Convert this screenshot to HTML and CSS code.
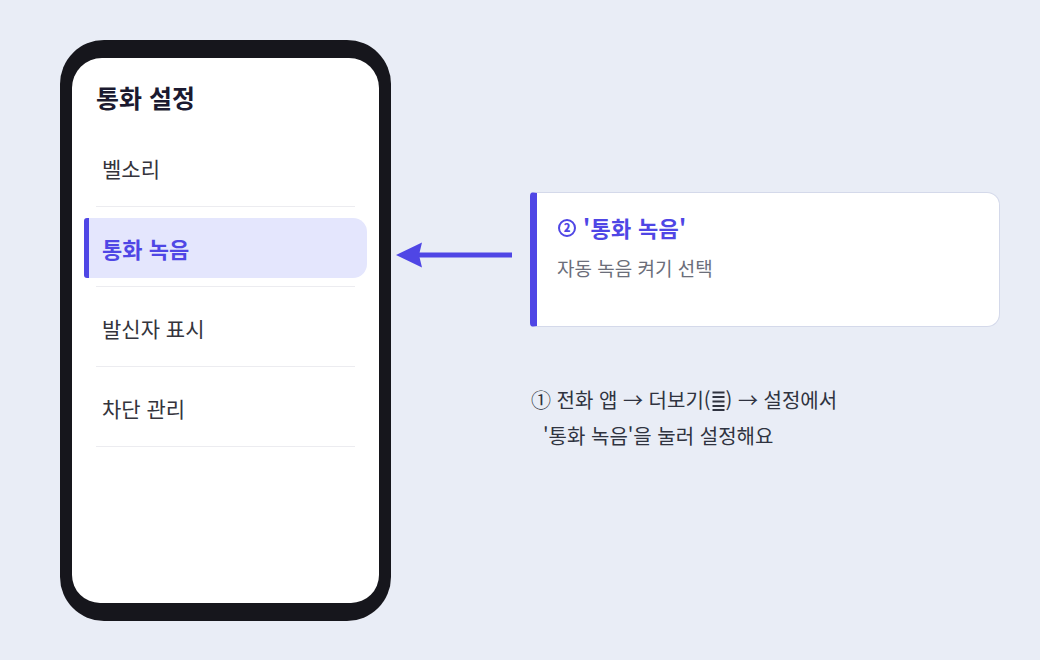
FILE: index.html
```html
<!DOCTYPE html>
<html lang="ko">
<head>
<meta charset="utf-8">
<title>통화 설정</title>
<link rel="stylesheet" href="styles.css">
</head>
<body>
<div class="stage">
  <div class="phone">
    <div class="screen">
      <h1 class="screen-title">통화 설정</h1>
      <ul class="menu">
        <li class="menu-row"><div class="menu-item">벨소리</div></li>
        <li class="menu-row"><div class="menu-item active">통화 녹음</div></li>
        <li class="menu-row"><div class="menu-item">발신자 표시</div></li>
        <li class="menu-row"><div class="menu-item">차단 관리</div></li>
      </ul>
    </div>
  </div>
  <div class="side">
    <div class="callout">
      <svg class="arrow" width="116" height="26" viewBox="0 0 116 26">
        <rect x="22" y="10.5" width="94" height="5" fill="#4f46e5"/>
        <path d="M0 13 L26 0.5 L23 13 L26 25.5 Z" fill="#4f46e5"/>
      </svg>
      <div class="card">
        <div class="card-title"><span class="num">2</span>'통화 녹음'</div>
        <div class="card-sub">자동 녹음 켜기 선택</div>
      </div>
    </div>
    <p class="note"><span class="note-line">① 전화 앱 → 더보기(<svg class="menu-icon" width="13" height="20" viewBox="0 0 13 20"><rect x="0.5" y="0.5" width="12" height="2" fill="#2f3340"/><rect x="0.5" y="5" width="12" height="2" fill="#2f3340"/><rect x="0.5" y="9.5" width="12" height="2" fill="#2f3340"/><rect x="0.5" y="14" width="12" height="2" fill="#2f3340"/><rect x="0.5" y="18" width="12" height="2" fill="#2f3340"/></svg>) → 설정에서</span><span class="note-line indent">'통화 녹음'을 눌러 설정해요</span></p>
  </div>
</div>
</body>
</html>
```
FILE: styles.css
```css
* { box-sizing: border-box; }
html, body {
  margin: 0;
  padding: 0;
  background: #e9edf6;
  font-family: "Noto Sans CJK KR", "Noto Sans", sans-serif;
}
.stage {
  display: flex;
  align-items: flex-start;
  padding: 40px 0 0 60px;
  width: 1040px;
  height: 660px;
}
.phone {
  width: 331px;
  height: 581px;
  padding: 18px 12px;
  background: #16161c;
  border-radius: 44px;
}
.screen {
  height: 545px;
  background: #ffffff;
  border-radius: 30px 30px 28px 28px;
  padding: 24px 24px 0;
}
.screen-title {
  margin: 0 0 15px;
  font-size: 25px;
  line-height: 30px;
  font-weight: 700;
  color: #1b1a30;
}
.menu {
  list-style: none;
  margin: 0;
  padding: 0;
}
.menu-row {
  padding: 11px 0 8px;
  border-bottom: 1px solid #ececf0;
}
.menu-item {
  height: 60px;
  display: flex;
  align-items: center;
  padding-left: 6px;
  font-size: 21px;
  color: #34343c;
}
.menu-item.active {
  margin: 0 -12px;
  padding-left: 13px;
  border-left: 5px solid #4f46e5;
  border-radius: 3px 14px 14px 3px;
  background: #e4e6fd;
  color: #4f46e5;
  font-size: 22px;
  font-weight: 700;
}
.side {
  margin-left: 5px;
  padding-top: 152px;
}
.callout {
  display: flex;
  align-items: flex-start;
  gap: 18px;
}
.arrow {
  display: block;
  margin-top: 50px;
}
.card {
  width: 470px;
  height: 135px;
  background: #ffffff;
  border: 1px solid #d4d9ea;
  border-left: 7px solid #4f46e5;
  border-radius: 4px 13px 13px 4px;
  padding: 20px 20px 0;
}
.card-title {
  display: flex;
  align-items: center;
  font-size: 22px;
  line-height: 28px;
  font-weight: 700;
  color: #4f46e5;
  letter-spacing: 0.3px;
}
.num {
  display: inline-flex;
  align-items: center;
  justify-content: center;
  width: 18px;
  height: 18px;
  margin: 1px 7px 0 1px;
  border: 2.5px solid #4f46e5;
  border-radius: 50%;
  font-size: 11px;
  line-height: 1;
  font-weight: 800;
  letter-spacing: 0;
}
.card-sub {
  margin-top: 14px;
  font-size: 19px;
  line-height: 26px;
  color: #6b6e7a;
}
.note {
  margin: 55px 0 0 135px;
  font-size: 20px;
  line-height: 36px;
  color: #2f3340;
}
.note-line { display: block; }
.note-line.indent { padding-left: 12px; }
.menu-icon {
  display: inline-block;
  vertical-align: -3px;
  margin: 0 1px;
}
```
